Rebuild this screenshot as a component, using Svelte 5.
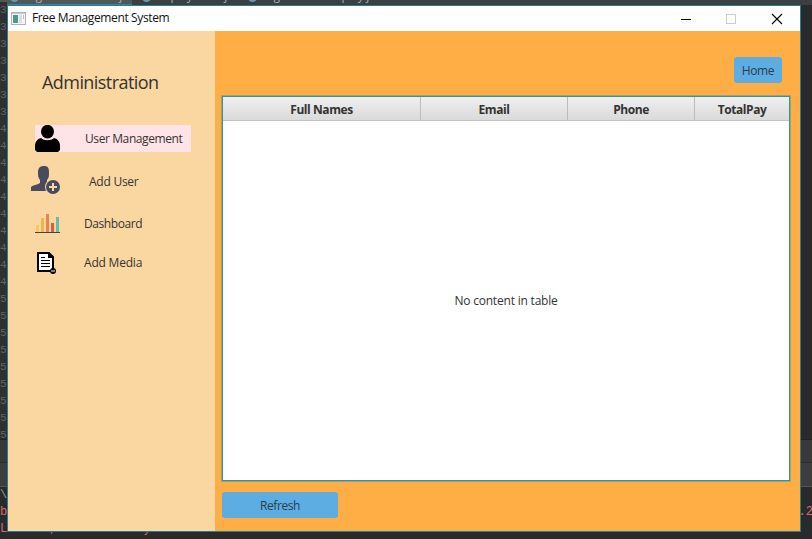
<script>
  const lines = [...Array(7).fill('3'), ...Array(10).fill('4'), ...Array(9).fill('5')];
  const columns = [
    { title: 'Full Names', width: 198 },
    { title: 'Email', width: 147 },
    { title: 'Phone', width: 127 },
    { title: 'TotalPay', width: 94 }
  ];
</script>

<div class="desktop">
  <div class="tabs">
    <div class="tab active"><i></i><span>Registercontroller.java</span></div>
    <div class="tab"><i></i><span>Displayusers.java</span></div>
    <div class="tab wide"><i></i><span>Registration display.java</span></div>
  </div>
  <div class="gutter">
    {#each lines as n}<span>{n}</span>{/each}
  </div>
  <div class="console">
    <div class="bar"></div>
    <div class="line path">\</div>
    <div class="line"><span>b</span><span class="end">.2</span></div>
    <div class="line"><span>L</span><span class="comma">,</span><span class="tail">y</span></div>
  </div>

  <div class="window">
    <header>
      <svg class="app" width="15" height="13" viewBox="0 0 15 13">
        <rect x=".5" y=".5" width="14" height="12" fill="#f3f5f7" stroke="#a9b3bd" />
        <path d="M1 1.500h13" stroke="#c4cbd3" />
        <rect x="2" y="3" width="5" height="8" fill="#4f9788" />
        <rect x="8" y="3" width="3" height="8" fill="#d9dde5" />
        <path d="M12.500 3v4" stroke="#b6bfca" />
      </svg>
      <span class="title">Free Management System</span>
      <svg class="controls" width="104" height="12" viewBox="0 0 104 12" fill="none">
        <path d="M0 6.500h10" stroke="#000" />
        <rect x="45.500" y="1.500" width="9" height="9" stroke="#ccc" />
        <path d="M91 1l10 10M101 1l-10 10" stroke="#000" stroke-width="1.100" />
      </svg>
    </header>
    <div class="body">
      <aside>
        <h1>Administration</h1>
        <nav>
          <div class="item users">
            <svg width="25" height="27" viewBox="0 0 25 27">
              <path d="M2 27l-2-2v-4c0-4 2-7 6-8 3 3 10 3 13 0 4 1 6 4 6 8v4l-2 2z" />
              <ellipse cx="12.500" cy="6.700" rx="6.500" ry="6.900" />
            </svg>
            <span>User Management</span>
          </div>
          <div class="item add">
            <svg width="29" height="29" viewBox="0 0 29 29">
              <path d="M7 6c0-4 2-6 6-6s5 2 5 6c0 4 0 6-2 8v4l3 1-3 6H0v-4c2-2 6-2 9-4v-3C7 12 7 9 7 6z" fill="#484a5d" />
              <circle cx="22" cy="21" r="8" fill="#fad7a0" />
              <circle cx="22" cy="21" r="7" fill="#484a5d" />
              <path d="M18 21h8M22 17v8" stroke="#fad7a0" stroke-width="2" />
            </svg>
            <span>Add User</span>
          </div>
          <div class="item dash">
            <svg width="25" height="20" viewBox="0 0 25 20">
              <path d="M0 18.500h25" stroke="#3f4548" />
              <path d="M1 11h3v7H1z" fill="#f6ca5c" />
              <path d="M6 4h3v14H6z" fill="#edb650" />
              <path d="M11 0h3v18h-3z" fill="#e6854f" />
              <path d="M16 9h3v9h-3z" fill="#e35849" />
              <path d="M21 3h3v15h-3z" fill="#69bca8" />
            </svg>
            <span>Dashboard</span>
          </div>
          <div class="item media">
            <svg width="19" height="22" viewBox="0 0 19 22">
              <path d="M1 1h11l4 4v14H1z" fill="#fff" stroke="#000" stroke-width="2" />
              <path d="M11 0v6h6z" />
              <path d="M4 5.500h4M4 8.500h9M4 11.500h9M4 14.500h9" stroke="#000" />
              <circle cx="16" cy="19" r="3" />
              <path d="M14 19h4" stroke="#fff" />
            </svg>
            <span>Add Media</span>
          </div>
        </nav>
      </aside>
      <main>
        <button class="home">Home</button>
        <section class="table">
          <div class="head">
            {#each columns as c}<div class="cell" style="width: {c.width}px">{c.title}</div>{/each}
          </div>
          <div class="empty"><span>No content in table</span></div>
        </section>
        <button class="refresh">Refresh</button>
      </main>
    </div>
  </div>
</div>

<style>
  :global(body) { overflow: hidden; }
  .desktop {
    position: relative; width: 812px; height: 539px; overflow: hidden;
    background: #282a2b; font: 12px "Open Sans", "Noto Sans", sans-serif; color: #333;
    display: flex; flex-direction: column;
  }
  .tabs { display: flex; height: 5px; flex: none; overflow: hidden; background: #3c3f41; color: #aaa; }
  .tab { display: flex; width: 106px; height: 5px; line-height: 16px; flex: none; }
  .tab span { margin-top: -12px; white-space: nowrap; font-size: 12px; letter-spacing: -.3px; }
  .tab i { width: 9px; height: 9px; border-radius: 50%; background: #6897a9; margin: -7px 3px 0 10px; flex: none; }
  .tab.active { width: 132px; background: #4e5759; box-shadow: inset 0 -1px #3d829c; }
  .tab.wide { width: 152px; }
  .gutter {
    width: 7px; height: 435px; flex: none; display: flex; flex-direction: column; background: #2e3032;
    color: #606366; font: 11px/17px "Liberation Mono", monospace; margin-top: -3px;
  }
  .gutter span { height: 17px; flex: none; }
  .console { display: flex; flex-direction: column; margin-top: 2px; }
  .bar {
    height: 48px; box-sizing: border-box; border-top: 1px solid #222; border-bottom: 1px solid #555;
    background: linear-gradient(#37393b 22px, #292b2c 22px, #292b2c 23px, #3b3d3f 23px);
  }
  .line { height: 17px; display: flex; color: #dd686b; font: 12px/17px "Liberation Mono", monospace; }
  .path { color: #999; }
  .end { margin: 0 -1px 0 auto; }
  .comma { margin-left: 42px; }
  .tail { margin-left: 87px; }
  .window {
    position: absolute; left: 7px; top: 5px; width: 794px; height: 527px; box-sizing: border-box;
    border: 1px solid #238091; display: flex; flex-direction: column; background: #fff;
  }
  header { height: 25px; display: flex; align-items: center; padding: 0 18px 0 3px; flex: none; color: #111; }
  .app { margin-right: 6px; margin-top: -1px; }
  .title { flex: 1; letter-spacing: -.37px; line-height: 24px; margin-top: -1px; }
  .controls { margin-right: -3px; }
  .body { flex: 1; display: flex; }
  aside { width: 207px; background: #fad7a0; flex: none; }
  h1 { margin: 38px 0 0 34px; font-size: 18px; line-height: 27px; font-weight: 400; letter-spacing: -.56px; }
  nav { margin-top: 29px; }
  .item { display: flex; align-items: center; line-height: 27px; }
  .item svg { flex: none; }
  .users { width: 156px; height: 27px; background: #ffe4e7; margin-left: 27px; }
  .users span { margin-left: 25px; letter-spacing: -.4px; }
  .add { height: 29px; margin: 14px 0 0 23px; }
  .add span { margin-left: 29px; letter-spacing: -.25px; padding-top: 1px; }
  .dash { height: 20px; margin: 19px 0 0 27px; }
  .dash span { margin-left: 24px; letter-spacing: -.42px; margin-top: -2px; }
  .media { height: 22px; margin: 18px 0 0 29px; }
  .media span { margin-left: 28px; letter-spacing: -.2px; margin-top: -2px; }
  main { flex: 1; min-width: 0; background: #ffae45; display: flex; flex-direction: column; padding: 26px 10px 13px 7px; }
  button { border: 0; padding: 0; border-radius: 3px; background: #5dade2; font: inherit; letter-spacing: -.4px; color: #253d4d; height: 26px; line-height: 25px; }
  .home { width: 48px; align-self: flex-end; margin-right: 8px; }
  .refresh { width: 116px; flex: none; }
  .table {
    width: 568px; height: 385px; margin: 13px 0 11px; box-sizing: border-box; flex: none;
    border: 1px solid #2f95a6; box-shadow: 0 0 0 1px rgba(47, 149, 166, .45);
    background: #fff; display: flex; flex-direction: column;
  }
  .head { display: flex; height: 24px; background: linear-gradient(#efefef, #d9d9d9); flex: none; box-shadow: inset 0 -1px #c2c2c2; }
  .cell { box-sizing: border-box; border-right: 1px solid #bcbcbc; text-align: center; line-height: 25px; font-weight: 700; letter-spacing: -.42px; flex: none; }
  .cell:last-child { border: 0; }
  .empty { flex: 1; display: flex; align-items: center; justify-content: center; letter-spacing: -.2px; }
</style>
